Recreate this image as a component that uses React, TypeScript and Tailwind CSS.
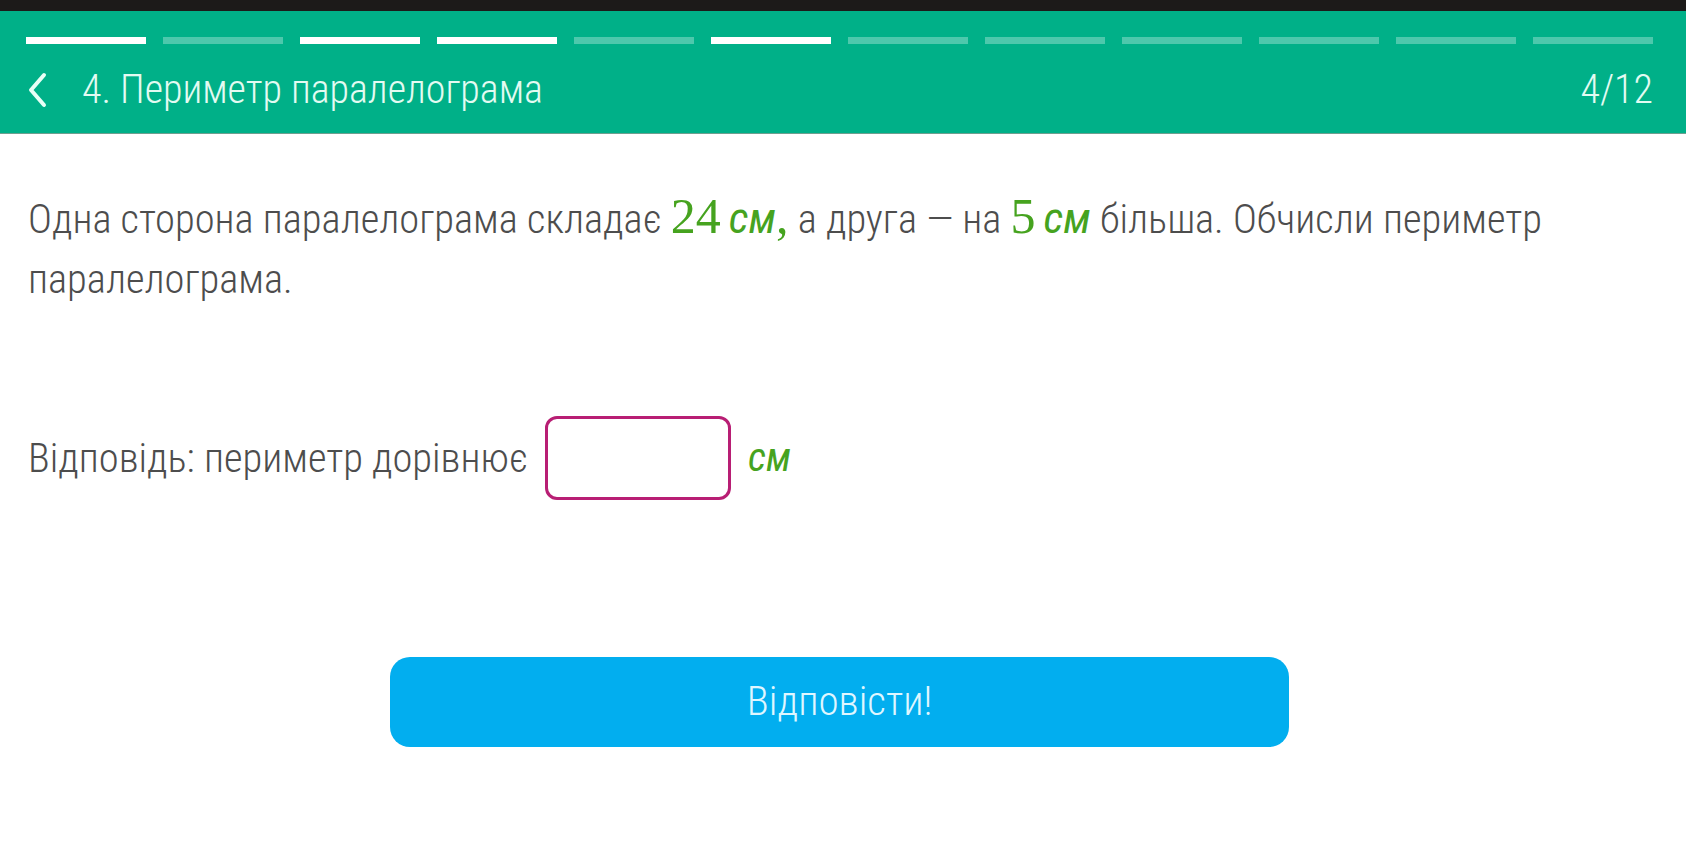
import React from 'react';

const steps = [true, false, true, true, false, true, false, false, false, false, false, false];

const Chevron = () => (
  <svg width="21" height="36" viewBox="0 0 21 36" fill="none">
    <polyline points="17,3 4,18 17,33" stroke="#e8fff6" strokeWidth="4" strokeLinecap="round" strokeLinejoin="round" />
  </svg>
);

const App: React.FC = () => {
  const cond = "font-['Roboto',sans-serif] font-light [font-stretch:75%]";
  const math = "font-['Liberation_Serif',serif] text-[50px] leading-none text-[#46a31f]";
  const unit = "font-['Roboto',sans-serif] font-normal italic [font-stretch:75%] leading-none text-[#46a31f]";

  return (
    <div className="min-h-[865px] w-full bg-white">
      <div className="h-[11px] bg-[#1c1a19]" />
      <header className="bg-[#00b088] border-b border-[#6f9f90] h-[123px] px-[26px] pt-[26px]">
        <div className="flex gap-[17px] pr-[7px]">
          {steps.map((done, i) => (
            <div key={i} className={`flex-1 h-[7px] ${done ? 'bg-white' : 'bg-white/30'}`} />
          ))}
        </div>
        <div className={`flex items-center justify-between mt-[16px] ${cond} text-[40px] text-[#e3fbf2]`}>
          <div className="flex items-center">
            <span className="ml-[1px] mr-[34px] flex">
              <Chevron />
            </span>
            <span>4. Периметр паралелограма</span>
          </div>
          <span className="pr-[7px]">4/12</span>
        </div>
      </header>

      <main className="px-[28px] pt-[55px]">
        <p className={`${cond} text-[40.5px] leading-[60px] text-[#4d4d4d]`}>
          Одна сторона паралелограма складає <span className={math}>24</span>
          <span className={`ml-[8px] text-[44px] ${unit}`}>см</span>
          <span className={math}>,</span> а друга — на <span className={math}>5</span>
          <span className={`ml-[8px] text-[44px] ${unit}`}>см</span> більша. Обчисли периметр паралелограма.
        </p>

        <div className={`flex items-center mt-[107px] h-[84px] ${cond} text-[40.5px] text-[#4d4d4d]`}>
          <span>Відповідь: периметр дорівнює</span>
          <input
            type="text"
            className="ml-[17px] w-[186px] h-[84px] border-[3px] border-[#b81e74] rounded-[12px] outline-none bg-white"
          />
          <span className={`ml-[17px] ${unit} text-[40px]`}>см</span>
        </div>

        <div className="mt-[157px] flex">
          <button className={`ml-[362px] w-[899px] h-[90px] rounded-[20px] bg-[#02aeef] ${cond} text-[41px] text-[#dff6ff]`}>
            Відповісти!
          </button>
        </div>
      </main>
    </div>
  );
};

export default App;
